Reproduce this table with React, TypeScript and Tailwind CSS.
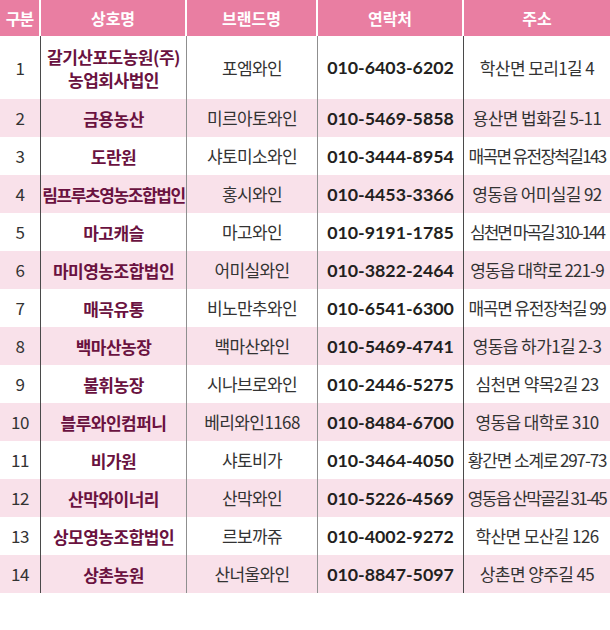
const rows = [
  { no: '1', name: ['갈기산포도농원(주)', '농업회사법인'], brand: '포엠와인', phone: '010-6403-6202', addr: '학산면 모리1길 4', tight: '', nameTight: '' },
  { no: '2', name: ['금용농산'], brand: '미르아토와인', phone: '010-5469-5858', addr: '용산면 법화길 5-11', tight: '', nameTight: '' },
  { no: '3', name: ['도란원'], brand: '샤토미소와인', phone: '010-3444-8954', addr: '매곡면 유전장척길143', tight: 'tracking-[-1.7px]', nameTight: '' },
  { no: '4', name: ['림프루츠영농조합법인'], brand: '홍시와인', phone: '010-4453-3366', addr: '영동읍 어미실길 92', tight: '', nameTight: 'tracking-[-1.4px]' },
  { no: '5', name: ['마고캐슬'], brand: '마고와인', phone: '010-9191-1785', addr: '심천면 마곡길 310-144', tight: 'tracking-[-2px]', nameTight: '' },
  { no: '6', name: ['마미영농조합법인'], brand: '어미실와인', phone: '010-3822-2464', addr: '영동읍 대학로 221-9', tight: 'tracking-[-0.9px]', nameTight: '' },
  { no: '7', name: ['매곡유통'], brand: '비노만추와인', phone: '010-6541-6300', addr: '매곡면 유전장척길 99', tight: 'tracking-[-1.2px]', nameTight: '' },
  { no: '8', name: ['백마산농장'], brand: '백마산와인', phone: '010-5469-4741', addr: '영동읍 하가1길 2-3', tight: '', nameTight: '' },
  { no: '9', name: ['불휘농장'], brand: '시나브로와인', phone: '010-2446-5275', addr: '심천면 약목2길 23', tight: '', nameTight: '' },
  { no: '10', name: ['블루와인컴퍼니'], brand: '베리와인1168', phone: '010-8484-6700', addr: '영동읍 대학로 310', tight: '', nameTight: '' },
  { no: '11', name: ['비가원'], brand: '샤토비가', phone: '010-3464-4050', addr: '황간면 소계로 297-73', tight: 'tracking-[-1.15px]', nameTight: '' },
  { no: '12', name: ['산막와이너리'], brand: '산막와인', phone: '010-5226-4569', addr: '영동읍 산막골길 31-45', tight: 'tracking-[-1.6px]', nameTight: '' },
  { no: '13', name: ['상모영농조합법인'], brand: '르보까쥬', phone: '010-4002-9272', addr: '학산면 모산길 126', tight: '', nameTight: '' },
  { no: '14', name: ['상촌농원'], brand: '산너울와인', phone: '010-8847-5097', addr: '상촌면 양주길 45', tight: '', nameTight: '' },
]

const kr = "font-['Noto_Sans_CJK_KR','Noto_Sans',sans-serif]"

export default function App() {
  return (
    <div className={`w-[610px] h-[630px] bg-white ${kr}`}>
      <div className="grid grid-cols-[41px_146px_131px_146px_146px] h-[36px] bg-[#e97ea2] text-white font-bold text-[16px]">
        {['구분', '상호명', '브랜드명', '연락처', '주소'].map((h, i) => (
          <div
            key={h}
            className={`flex items-center justify-center ${i < 4 ? 'border-r-2 border-white' : ''} ${i === 0 ? 'tracking-[-1px]' : ''}`}
          >
            {h}
          </div>
        ))}
      </div>
      {rows.map((r, i) => (
        <div
          key={r.no}
          className={`grid grid-cols-[41px_146px_131px_146px_146px] ${i === 0 ? 'h-[63px]' : 'h-[38px]'} ${i % 2 === 1 ? 'bg-[#f9e1ea]' : 'bg-white'}`}
        >
          <div className="flex items-center justify-center border-r border-[#4a4a4a] text-[17px] text-[#333] tracking-[-0.5px]">
            {r.no}
          </div>
          <div className={`flex flex-col items-center justify-center border-r border-[#8f8f8f] text-[17px] font-bold text-[#6a1240] leading-[23px] whitespace-nowrap tracking-[-0.5px] ${r.nameTight}`}>
            {r.name.map((n) => (
              <span key={n}>{n}</span>
            ))}
          </div>
          <div className="flex items-center justify-center border-r border-[#8f8f8f] text-[17px] text-[#333] tracking-[-0.6px] whitespace-nowrap">
            {r.brand}
          </div>
          <div className="flex items-center justify-center border-r border-[#4a4a4a] font-['Lato',sans-serif] font-bold text-[17.8px] text-[#231f20]">
            {r.phone}
          </div>
          <div className={`flex items-center justify-center text-[17px] text-[#333] whitespace-nowrap tracking-[-0.6px] ${r.tight}`}>
            {r.addr}
          </div>
        </div>
      ))}
    </div>
  )
}
